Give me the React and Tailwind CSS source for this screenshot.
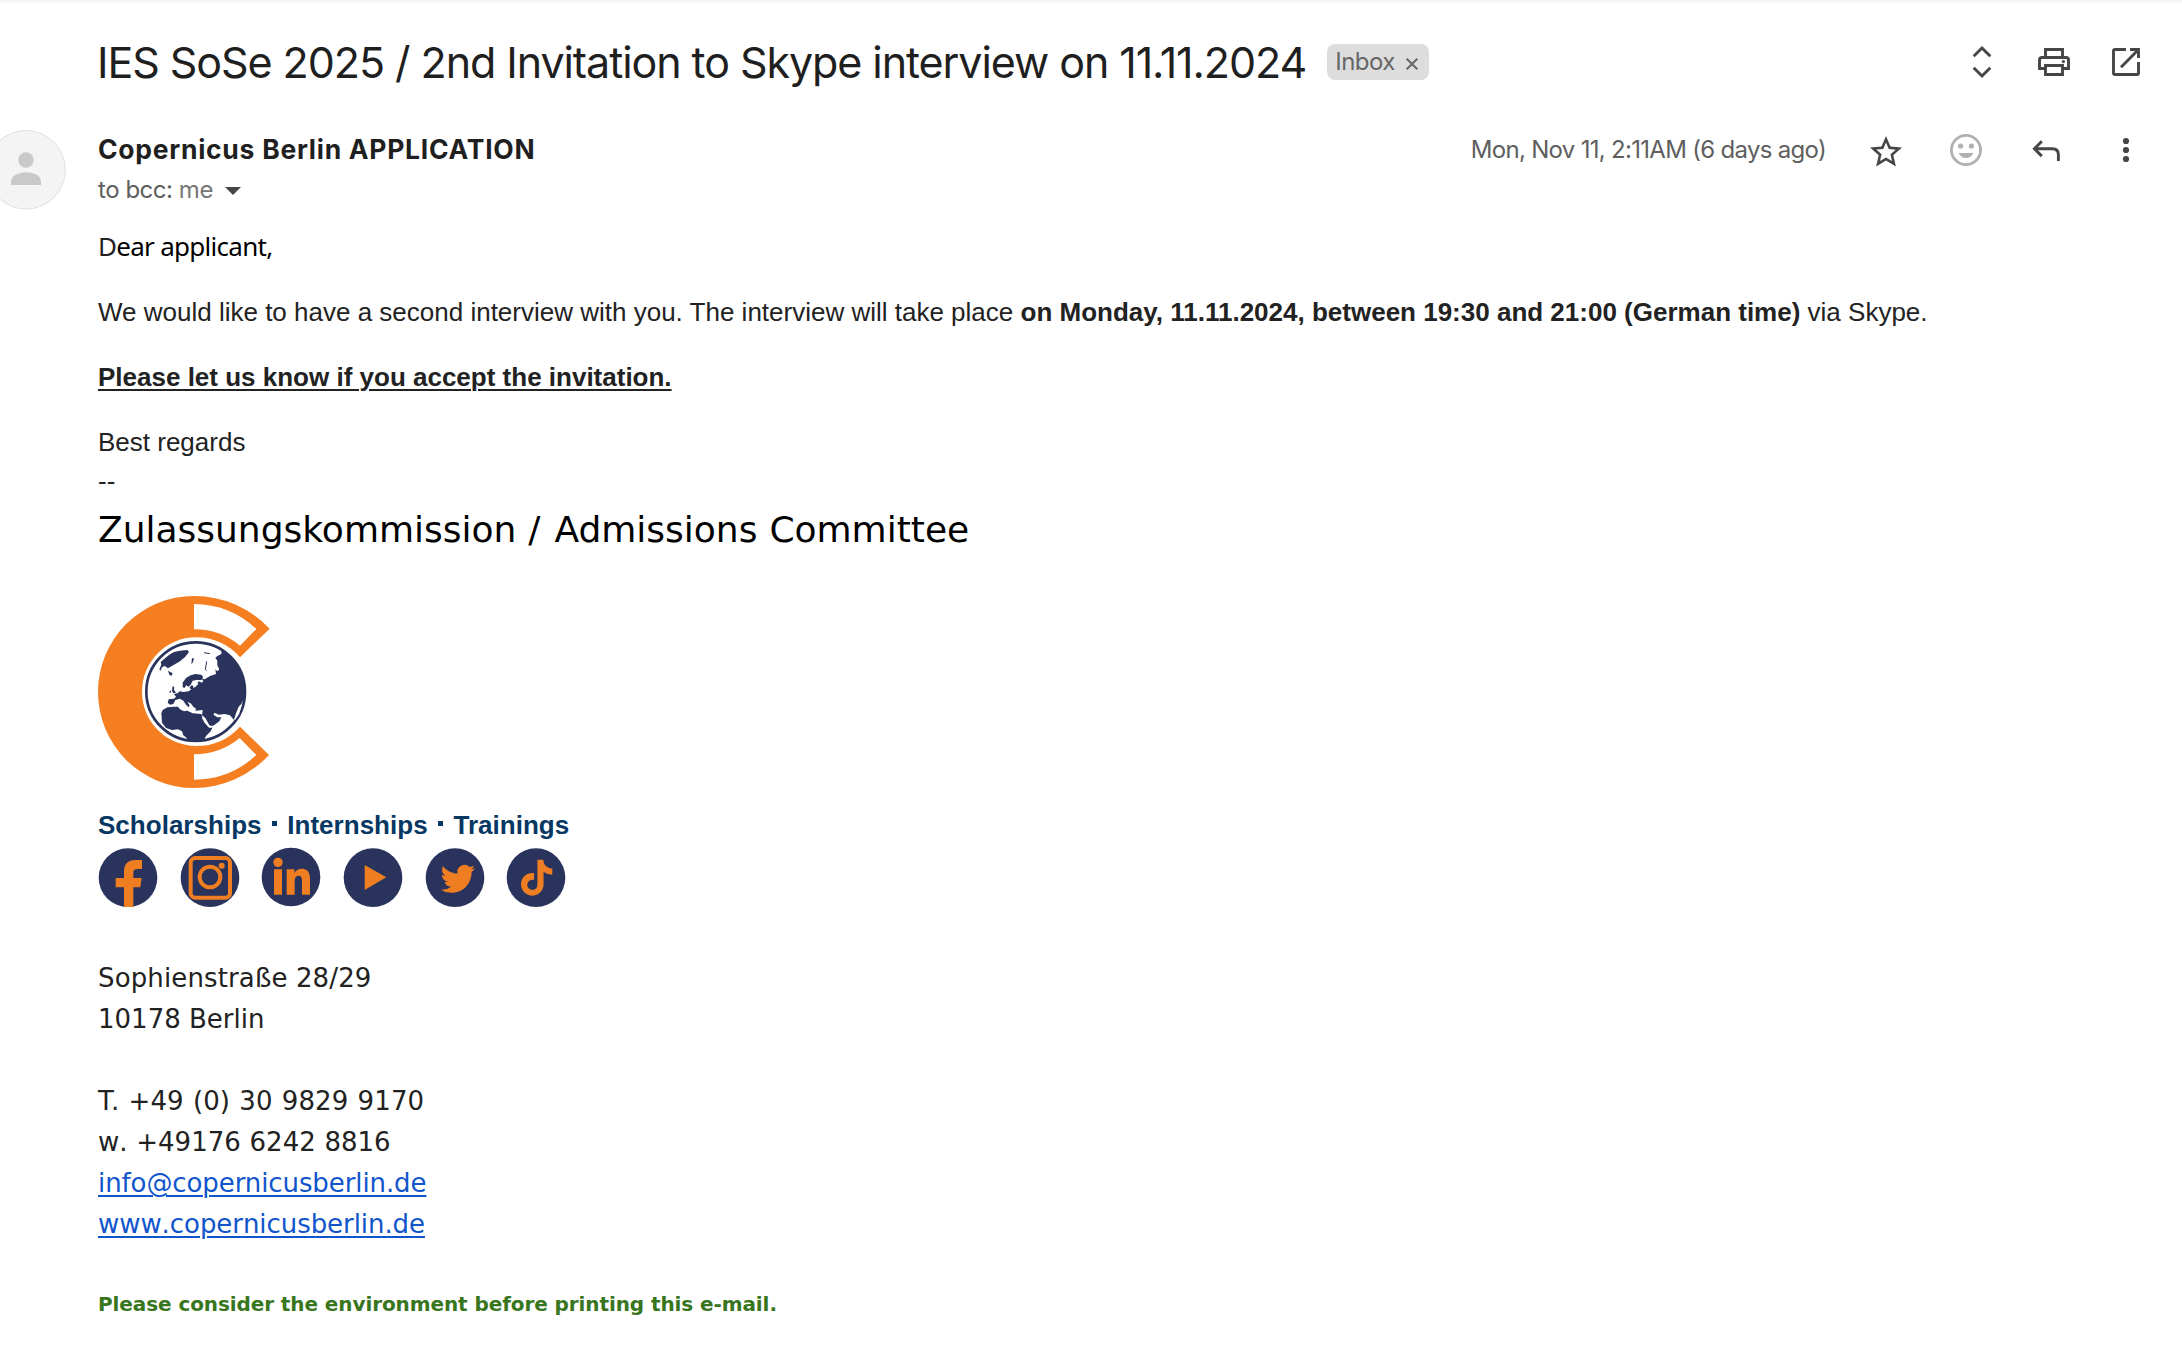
import React from "react";

const INK = "#444746";
const NAVY = "#29335c";
const ORANGE = "#f57e20";
const SOCIAL = "#ef7d22";

function Icon({ children }) {
  return (
    <svg className="h-10 w-10 shrink-0" viewBox="0 0 40 40" fill="none" stroke={INK} strokeWidth="2.9">
      {children}
    </svg>
  );
}

function ToolbarIcons() {
  return (
    <div className="flex items-center gap-8">
      <Icon>
        <path d="M11.7 14.3L20 6l8.3 8.3M11.7 25.7L20 34l8.3-8.3" />
      </Icon>
      <Icon>
        <path d="M11.5 15V7.5h17V15" />
        <path d="M11 26.5H5.5V18q0-2.5 2.5-2.5h24q2.5 0 2.5 2.5v8.5H29" />
        <path d="M11.5 23.5h17v9h-17z" />
        <circle cx="29.4" cy="19.6" r="1.6" fill={INK} stroke="none" />
      </Icon>
      <Icon>
        <path d="M20 7.5H9Q7.5 7.5 7.5 9v22q0 1.5 1.5 1.5h22q1.5 0 1.5-1.5V20" />
        <path d="M24 7.5h8.5V16M32 8L15 25.3" />
      </Icon>
    </div>
  );
}

function MessageIcons() {
  return (
    <div className="flex items-center gap-10">
      <svg className="h-10 w-10 shrink-0" viewBox="0 0 40 40" fill={INK}>
        <path
          transform="translate(0.8 2.8) scale(1.6)"
          d="M22 9.24l-7.19-.62L12 2 9.19 8.63 2 9.24l5.46 4.73L5.82 21 12 17.27 18.18 21l-1.63-7.03L22 9.24zM12 15.4l-3.76 2.27 1-4.28-3.32-2.88 4.38-.38L12 6.1l1.71 4.04 4.38.38-3.32 2.88 1 4.28L12 15.4z"
        />
      </svg>
      <svg className="h-10 w-10 shrink-0" viewBox="0 0 40 40" fill="#b0b0b0">
        <circle cx="20" cy="20" r="14.6" fill="none" stroke="#b0b0b0" strokeWidth="2.8" />
        <circle cx="14.6" cy="16" r="2.6" />
        <circle cx="25.4" cy="16" r="2.6" />
        <path d="M12.5 23h15q-2.5 5-7.5 5t-7.5-5z" />
      </svg>
      <Icon>
        <path d="M15.8 11.3L8.4 18.7l7.4 7.4M8.4 18.7h18q6 0 6 6V31" />
      </Icon>
      <svg className="h-10 w-10 shrink-0" viewBox="0 0 40 40" fill={INK}>
        <circle cx="20" cy="11" r="3.1" />
        <circle cx="20" cy="20" r="3.1" />
        <circle cx="20" cy="29" r="3.1" />
      </svg>
    </div>
  );
}

function Avatar() {
  return (
    <svg className="h-20 w-[66px]" viewBox="0 0 66 80">
      <circle cx="26" cy="39.8" r="39.3" fill="#f4f4f4" stroke="#e0e0e0" />
      <circle cx="26" cy="30" r="7.7" fill="#c9c9c9" />
      <path d="M11 55v-3.5c0-5.5 7-9.2 15-9.2s15 3.7 15 9.2V55z" fill="#c9c9c9" />
    </svg>
  );
}

function Logo() {
  return (
    <svg className="h-48 w-[172px]" viewBox="54 48 516 576">
      <path
        fill={ORANGE}
        d="M342 48A288 288 0 0 0 342 624A310 310 0 0 0 567 525L480 440A178 178 0 0 1 348 498A162 163 0 0 1 348 172A178 178 0 0 1 480 232L569 146A310 310 0 0 0 342 48Z"
      />
      <path fill="#fff" d="M342 72A275 275 0 0 1 529 147L480 197A215 215 0 0 0 342 148Z" />
      <path fill="#fff" d="M342 523A215 215 0 0 0 479 474L529 525A275 275 0 0 1 342 599Z" />
      <clipPath id="globe">
        <circle cx="197" cy="185" r="149" />
      </clipPath>
      <g transform="translate(150 150)" fill={NAVY} strokeLinejoin="round">
        <circle cx="197" cy="185" r="148" fill="#fff" stroke={NAVY} strokeWidth="8" />
        <g clipPath="url(#globe)">
          <path d="M88 118L94 104L92 96L106 84L118 74L132 66L150 62L172 60L177 66L166 80L150 94L132 104L114 115L104 108L96 112L92 122Z" />
          <path d="M275 60L274 72L262 78L256 83L262 92L262 106L268 118L262 124L256 118L258 132L240 138L224 148L214 146L220 152L216 158L206 154L198 164L196 170L184 166L178 174L184 178L176 184L160 186L150 184L142 190L132 192L138 200L132 206L116 208L113 218L120 224L130 222L136 210L150 206L160 212L168 224L176 232L179 226L172 216L182 220L190 230L198 236L196 242L218 240L216 256L226 264L234 278L240 290L252 286L268 274L274 262L262 262L250 254L254 248L266 254L284 252L300 256L312 270L318 250L326 230L334 222L350 190L350 60Z" />
          <path d="M158 172L158 158L168 144L182 136L196 132L214 134L220 142L214 150L200 150L188 152L182 164L176 170L168 166L164 174Z" />
          <path d="M94 250L98 240L112 232L134 230L144 230L150 238L162 244L172 242L188 250L214 252L218 264L228 280L240 292L248 292L242 304L228 318L222 330L224 342L172 342L170 324L160 316L156 304L144 298L126 300L108 294L96 278Z" />
          <path d="M128 168L133 172L132 180L138 188L130 190L126 182ZM120 182L124 182L122 188L118 188ZM114 122L128 130L124 138L118 134ZM186 84L192 86L188 98L184 102Z" />
          <path d="M222 68L240 71M230 94L226 118L230 122" fill="none" stroke={NAVY} strokeWidth="3" />
        </g>
        <path d="M218 262L226 276L238 290L246 290" fill="none" stroke="#fff" strokeWidth="6" />
        <path d="M333 226L326 250L314 268" fill="none" stroke="#fff" strokeWidth="4" />
        <path d="M190 172L196 168L204 160" fill="none" stroke="#fff" strokeWidth="4" />
      </g>
    </svg>
  );
}

function Social({ cy = 92, children }) {
  return (
    <svg className="h-[60px] w-[60px] shrink-0" viewBox="0 0 180 180" fill={SOCIAL}>
      <circle cx="90" cy={cy} r="88" fill={NAVY} />
      {children}
    </svg>
  );
}

function SocialRow() {
  return (
    <div className="mt-1 flex gap-[21.7px]">
      <Social>
        <path d="M78 180V121H53V93H78V72C78 50 92 39 112 39H132V66H118C110 66 106 70 106 77V93H131L127 121H106V180Z" />
      </Social>
      <Social>
        <rect x="32" y="33" width="118" height="119" rx="14" fill="none" stroke={SOCIAL} strokeWidth="12" />
        <circle cx="90" cy="90" r="31" fill="none" stroke={SOCIAL} strokeWidth="12" />
        <circle cx="125" cy="56" r="9" />
      </Social>
      <Social cy={90}>
        <circle cx="51" cy="46" r="14" />
        <path d="M39 67H63V143H39ZM77 67H100V77C106 69 113 65 123 65C140 65 147 77 147 96V143H123V102C123 91 120 86 113 86C105 86 101 92 101 102V143H77Z" />
      </Social>
      <Social>
        <path d="M65 54L130 91L65 129Z" />
      </Social>
      <Social>
        <path
          transform="translate(47 44) scale(4.3)"
          d="M23.953 4.57a10 10 0 01-2.825.775 4.958 4.958 0 002.163-2.723c-.951.555-2.005.959-3.127 1.184a4.92 4.92 0 00-8.384 4.482C7.69 8.095 4.067 6.13 1.64 3.162a4.822 4.822 0 00-.666 2.475c0 1.71.87 3.213 2.188 4.096a4.904 4.904 0 01-2.228-.616v.06a4.923 4.923 0 003.946 4.827 4.996 4.996 0 01-2.212.085 4.936 4.936 0 004.604 3.417 9.867 9.867 0 01-6.102 2.105c-.39 0-.779-.023-1.17-.067a13.995 13.995 0 007.557 2.209c9.053 0 13.998-7.496 13.998-13.985 0-.21 0-.42-.015-.63A9.935 9.935 0 0024 4.59z"
        />
      </Social>
      <Social>
        <path
          transform="translate(38 38) scale(4.5)"
          d="M12.525.02c1.31-.02 2.61-.01 3.91-.02.08 1.53.63 3.09 1.75 4.17 1.12 1.11 2.7 1.62 4.24 1.79v4.03c-1.44-.05-2.89-.35-4.2-.97-.57-.26-1.1-.59-1.62-.93-.01 2.92.01 5.84-.02 8.75-.08 1.4-.54 2.79-1.35 3.94-1.31 1.92-3.58 3.17-5.91 3.21-1.43.08-2.86-.31-4.08-1.03-2.02-1.19-3.44-3.37-3.65-5.71-.02-.5-.03-1-.01-1.49.18-1.9 1.12-3.72 2.58-4.96 1.66-1.44 3.98-2.13 6.15-1.72.02 1.48-.04 2.96-.04 4.44-.99-.32-2.15-.23-3.02.37-.63.41-1.11 1.04-1.36 1.75-.21.51-.15 1.07-.14 1.61.24 1.64 1.82 3.02 3.5 2.87 1.12-.01 2.19-.66 2.77-1.61.19-.33.4-.67.41-1.06.1-1.79.06-3.57.07-5.36.01-4.03-.01-8.05.02-12.07z"
        />
      </Social>
    </div>
  );
}

function Dot() {
  return <span className="mr-[10.6px] mb-[3px] ml-[10.2px] inline-block h-[5px] w-[5px] bg-[#073763]" />;
}

function Signature() {
  return (
    <div className="font-['DejaVu_Sans',sans-serif]">
      <p className="mt-1.5 text-[36px] leading-[50px] [word-spacing:0.5px] text-black">
        Zulassungskommission <span className="mr-0.5">/</span> Admissions Committee
      </p>
      <div className="mt-[41px]">
        <Logo />
      </div>
      <p className="mt-[19px] flex items-center font-['Liberation_Sans',sans-serif] text-[26px] leading-9 font-bold tracking-[0.02px] text-[#073763]">
        Scholarships
        <Dot />
        Internships
        <Dot />
        Trainings
      </p>
      <SocialRow />
      <div className="mt-[51px] text-[26px] leading-[41px]">
        <p className="tracking-[0.13px]">Sophienstraße 28/29</p>
        <p>10178 Berlin</p>
        <p className="mt-[41px] tracking-[0.12px] [word-spacing:0.8px]">T. +49 (0) 30 9829 9170</p>
        <p className="[font-kerning:none] [word-spacing:0.5px]">w. +49176 6242 8816</p>
        <p className="text-[#1155cc]">
          <a className="tracking-[-0.09px] underline decoration-2 underline-offset-[3px]" href="#mail">info@copernicusberlin.de</a>
        </p>
        <p className="text-[#1155cc]">
          <a className="tracking-[-0.06px] underline decoration-2 underline-offset-[3px] [font-kerning:none]" href="#web">www.copernicusberlin.de</a>
        </p>
      </div>
      <p className="mt-[44px] text-[20px] leading-[30px] font-bold tracking-[-0.09px] text-[#38761d]">
        Please consider the environment before printing this e-mail.
      </p>
    </div>
  );
}

export default function App() {
  return (
    <div className="h-[1364px] w-[2182px] overflow-hidden bg-white font-['Inter',sans-serif] text-[#222222]">
      <div className="h-1 bg-linear-to-b from-[#f1f1f1] to-white" />
      <header className="flex h-[116px] items-center justify-between pr-9 pl-[98px]">
        <div className="flex items-center">
          <h1 className="-ml-px text-[43px] leading-[56px] font-normal tracking-[-1.07px] whitespace-nowrap text-[#1f1f1f]">
            IES SoSe 2025 / 2nd Invitation to Skype interview on 11.11.2024
          </h1>
          <div className="ml-[21px] flex h-9 w-[102px] items-center rounded-lg bg-[#dddddd] pl-2 text-[#666666]">
            <span className="text-[24px] leading-9 tracking-[-0.55px]">Inbox</span>
            <svg className="mt-[3px] ml-[11px] h-3 w-3" viewBox="0 0 12 12" fill="none" stroke="#666666" strokeWidth="2">
              <path d="M0.7 0.7L11.3 11.3M11.3 0.7L0.7 11.3" />
            </svg>
          </div>
        </div>
        <ToolbarIcons />
      </header>
      <main className="flex pt-[10px]">
        <div className="w-[98px] shrink-0">
          <Avatar />
        </div>
        <article className="min-w-0 flex-1">
          <div className="flex items-start justify-between pr-9">
            <div className="pt-px">
              <p className="text-[26.5px] leading-9 font-bold tracking-[0.72px] text-[#1f1f1f]">
                Copernicus Berlin APPLICATION
              </p>
              <div className="mt-2 flex items-center gap-3">
                <span className="text-[24px] leading-[30px] tracking-[-0.46px] text-[#5e5e5e]">
                  to bcc: <span className="text-[#777777]">me</span>
                </span>
                <svg className="mt-0.5 h-2 w-4" viewBox="0 0 16 8" fill="#444746">
                  <path d="M0 0h16L8 8z" />
                </svg>
              </div>
            </div>
            <div className="flex items-center gap-10">
              <span className="text-[24px] leading-10 tracking-[-0.7px] whitespace-nowrap text-[#5e5e5e]">
                Mon, Nov 11, 2:11AM (6 days ago)
              </span>
              <MessageIcons />
            </div>
          </div>
          <div className="mt-[23px] font-['Liberation_Sans',sans-serif] text-[26px] leading-9">
            <p className="font-['Noto_Sans',sans-serif] tracking-[-0.72px] text-black">
              <span className="text-[#222222]">D</span>ear applicant,
            </p>
            <p className="mt-[30px]">
              We would like to have a second interview with you. The interview will take place{" "}
              <b>on Monday, 11.11.2024, between 19:30 and 21:00 (German time)</b> via Skype.
            </p>
            <p className="mt-[29px] font-bold underline decoration-2 underline-offset-[3px]">
              Please let us know if you accept the invitation.
            </p>
            <p className="mt-[29px]">Best regards</p>
            <p className="mt-[3px]">--</p>
          </div>
          <Signature />
        </article>
      </main>
    </div>
  );
}
